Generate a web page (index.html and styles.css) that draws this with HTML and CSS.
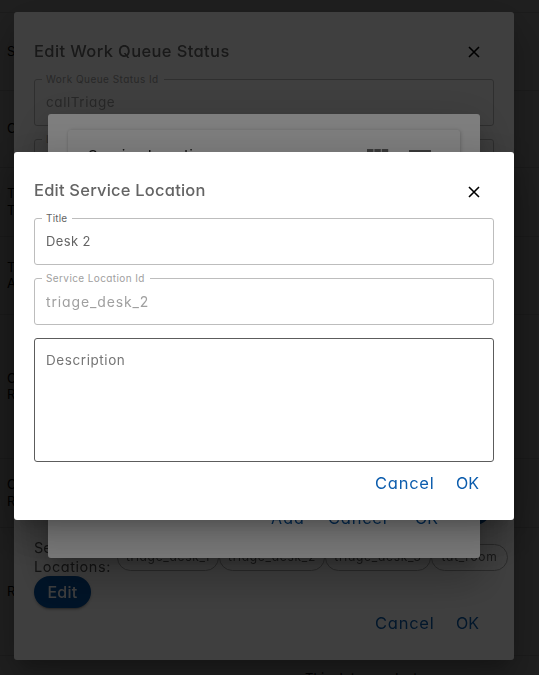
FILE: index.html
```
<!DOCTYPE html>
<html lang="en">
<head>
<meta charset="utf-8">
<title>Edit Service Location</title>
<link rel="stylesheet" href="styles.css">
</head>
<body>
<main class="table">
  <div class="row r-top"></div>
  <div class="row r-78">S</div>
  <div class="row r-77">C</div>
  <div class="row r-69">T<br>T</div>
  <div class="row r-78">T<br>A</div>
  <div class="row r-144">C<br>R</div>
  <div class="row r-69">C<br>R</div>
  <div class="row r-128">R</div>
  <div class="notice">This data was last</div>
</main>

<div class="overlay">
  <section class="dialog queue">
    <header class="head"><h2 class="t-queue">Edit Work Queue Status</h2>
      <svg class="close" viewBox="0 0 12 12"><path d="M1 1l10 10M11 1L1 11"/></svg></header>
    <div class="field disabled"><label class="l-queue">Work Queue Status Id</label><span class="v-queue">callTriage</span></div>
    <div class="field disabled"><label class="l-label">Label</label></div>
    <div class="spacer"><span class="round"></span></div>
    <div class="locations">
      <div class="loc-label"><span>Service</span><br><span class="v-loc">Locations:</span></div>
      <div class="chips"><span class="chip c1">triage_desk_1</span><span class="chip c2">triage_desk_2</span><span class="chip c3">triage_desk_3</span><span class="chip c4">tat_room</span></div>
    </div>
    <button class="edit">Edit</button>
    <footer class="actions"><span class="cancel">Cancel</span><span class="ok">OK</span></footer>
  </section>
</div>

<div class="overlay">
  <section class="dialog list">
    <div class="card">
      <span class="card-title">Service Location</span>
      <svg class="grid-icon" viewBox="0 0 22 16"><path d="M0 0h6.4v7H0zM7.4 0h6.4v7H7.4zM14.8 0h6.4v7h-6.4zM0 8h6.4v7H0zM7.4 8h6.4v7H7.4zM14.8 8h6.4v7h-6.4z"/></svg>
      <svg class="filter-icon" viewBox="0 0 22 14"><path d="M0 0h22v3H0zM4 5h14v3H4zM8 10h6v3H8z"/></svg>
    </div>
    <footer class="actions"><span class="add">Add</span><span class="cancel">Cancel</span><span class="ok">OK</span></footer>
  </section>
</div>

<div class="overlay">
  <section class="dialog service">
    <header class="head"><h2 class="t-service">Edit Service Location</h2>
      <svg class="close" viewBox="0 0 12 12"><path d="M1 1l10 10M11 1L1 11"/></svg></header>
    <div class="field"><label class="l-title">Title</label><span class="v-title">Desk 2</span></div>
    <div class="field disabled"><label class="l-id">Service Location Id</label><span class="v-id">triage_desk_2</span></div>
    <div class="area"><span class="v-desc">Description</span></div>
    <footer class="actions"><span class="cancel">Cancel</span><span class="ok">OK</span></footer>
  </section>
</div>
</body>
</html>
```
FILE: styles.css
```
* { box-sizing: border-box; }
body {
  margin: 0;
  height: 675px;
  overflow: hidden;
  background: #fff;
  font-family: Inter, "Open Sans", sans-serif;
  font-feature-settings: "cv11";
  color: #646464;
}
.table { color: #000; }
.row {
  display: flex;
  align-items: center;
  padding: 0 0 1px 7px;
  border-bottom: 1px solid #e0e0e0;
  font-size: 13px;
  line-height: 16.5px;
}
.r-top { height: 13px; }
.r-69 { height: 69px; }
.r-77 { height: 77px; }
.r-78 { height: 78px; }
.r-128 { height: 128px; }
.r-144 { height: 144px; }
.notice { padding: 14px 0 0 305px; font-size: 13px; line-height: 16px; }

.overlay {
  position: fixed;
  inset: 0;
  display: flex;
  align-items: center;
  justify-content: center;
  padding: 0 11px 3px 0;
  background: rgba(0, 0, 0, .5);
}
.dialog {
  display: flex;
  flex-direction: column;
  flex: none;
  background: #fff;
  border-radius: 3px;
  box-shadow: 0 11px 15px -7px rgba(0,0,0,.2), 0 24px 38px 3px rgba(0,0,0,.14), 0 9px 46px 8px rgba(0,0,0,.12);
}
.queue { width: 500px; height: 648px; padding: 20px; }
.service { width: 500px; height: 368px; padding: 20px; }
.list { width: 432px; height: 444px; padding: 16px 20px 20px; justify-content: space-between; }

.head { display: flex; justify-content: space-between; align-items: center; height: 46px; flex: none; padding: 0 14px 11px 0; }
.queue .head { height: 47px; padding-bottom: 9px; }
h2 { margin: 0; font-size: 16.5px; font-weight: 500; line-height: 24px; white-space: nowrap; }
.close { width: 12px; height: 12px; margin-top: 5px; stroke: #000; stroke-width: 1.6; fill: none; }
.queue .close { margin-top: 2px; }

.field {
  position: relative;
  flex: none;
  height: 47px;
  margin-bottom: 13px;
  padding: 0 11px;
  border: 1px solid #bdbdbd;
  border-radius: 3px;
  font-size: 13px;
  line-height: 45px;
}
.field label {
  position: absolute;
  left: 7px;
  top: -8px;
  height: 14px;
  padding-left: 4px;
  background: #fff;
  font-size: 10px;
  line-height: 14px;
  white-space: nowrap;
}
.disabled { color: #a0a0a0; }
.area { flex: none; height: 124px; padding: 11px; border: 1px solid #5c5c5c; border-radius: 3px; font-size: 13px; line-height: 20px; color: #757575; }
.actions { display: flex; justify-content: flex-end; flex: none; height: 24px; margin-top: auto; font-size: 16px; line-height: 24px; color: #0b5cad; }
.queue .actions, .service .actions { margin-bottom: 5px; }
.cancel { width: 81px; font-size: 16.5px; letter-spacing: .75px; }
.ok { width: 38px; letter-spacing: 0; }
.list .actions { margin-bottom: 8px; }
.list .cancel { width: 87px; }
.list .ok { width: 45px; }
.add { width: 57px; letter-spacing: 1.1px; }

.card {
  display: flex;
  align-items: flex-start;
  height: 340px;
  padding: 18px 29px 0 20px;
  border-radius: 3px;
  box-shadow: 0 2px 1px -1px rgba(0,0,0,.2), 0 1px 3px rgba(0,0,0,.12), 1px 0 4px rgba(0,0,0,.15);
}
.card-title { flex: 1; margin-top: -3px; color: #222; font-size: 15px; line-height: 22px; letter-spacing: .25px; }
.grid-icon { width: 22px; height: 16px; margin: 1px 20px 0 0; fill: #757575; }
.filter-icon { width: 22px; height: 14px; margin-top: 2px; fill: #757575; }

.spacer { display: flex; height: 339px; flex: none; align-items: flex-end; justify-content: flex-end; padding: 0 3px 13px 0; }
.round { width: 32px; height: 32px; border-radius: 16px; background: #0050a0; }
.locations { display: flex; flex: none; height: 38px; margin-right: -14px; }
.loc-label { width: 83px; font-size: 14.5px; line-height: 19px; color: #505050; white-space: nowrap; }
.chips { display: flex; align-items: flex-start; height: 27px; margin-top: 6px; }
.chip { flex: none; height: 27px; border: 1px solid #ababab; border-radius: 14px; font-size: 12px; line-height: 24px; letter-spacing: .7px; text-align: center; }
.c1 { width: 102px; }
.c2, .c3 { width: 106px; }
.c4 { width: 77px; }
.edit {
  flex: none;
  align-self: flex-start;
  width: 57px;
  height: 32px;
  padding: 0;
  border: 0;
  border-radius: 16px;
  background: #0050a0;
  color: #fff;
  font: 500 16px/31px Inter, sans-serif;
  letter-spacing: .3px;
  box-shadow: 0 3px 1px -2px rgba(0,0,0,.2), 0 2px 2px rgba(0,0,0,.14), 0 1px 5px rgba(0,0,0,.12);
}
.t-queue { letter-spacing: .38px; }
.t-service { letter-spacing: .21px; }
.l-queue { width: 122px; letter-spacing: .47px; }
.l-label { width: 40px; }
.l-id { width: 108px; letter-spacing: .4px; }
.l-title { width: 30px; letter-spacing: .2px; }
.v-title { letter-spacing: .4px; }
.v-queue, .v-desc { font-size: 13.5px; letter-spacing: .58px; }
.v-id { font-size: 14px; letter-spacing: .87px; }
.v-loc { letter-spacing: .55px; }
```
